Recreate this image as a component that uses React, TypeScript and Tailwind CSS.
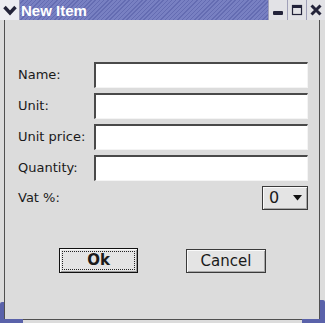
import { useState } from "react";

const fields = ["Name:", "Unit:", "Unit price:", "Quantity:"];

export default function App() {
  const [values, setValues] = useState<string[]>(["", "", "", ""]);

  return (
    <div className="relative w-[325px] h-[323px] bg-[#dcdcdc] flex flex-col font-['DejaVu_Sans',sans-serif] text-[13px] text-[#1a1a1a] overflow-hidden">
      {/* title bar */}
      <div className="h-[20px] flex shrink-0">
        <div className="w-[20px] bg-[#ececf2] flex items-center justify-center border-r border-[#9a9ab8]">
          <svg width="14" height="11" viewBox="0 0 14 11">
            <path d="M1.5 2 L7 8 L12.5 2" fill="none" stroke="#23233a" strokeWidth="3.4" />
          </svg>
        </div>
        <div className="flex-1 flex items-center pl-[1px] bg-[repeating-linear-gradient(135deg,#7880c2_0px,#7880c2_2px,#646cb2_2px,#646cb2_3px)]">
          <span className="font-['Liberation_Sans',sans-serif] font-bold text-[15px] text-white leading-none">New Item</span>
        </div>
        <TitleButton>
          <rect x="3" y="9" width="10" height="4" rx="1" fill="#23233a" />
        </TitleButton>
        <TitleButton>
          <rect x="3.5" y="3.5" width="9" height="9" fill="none" stroke="#23233a" strokeWidth="1.2" />
          <rect x="3" y="3" width="10" height="3" fill="#23233a" />
        </TitleButton>
        <TitleButton>
          <path d="M3.5 3.5 L12.5 12.5 M12.5 3.5 L3.5 12.5" stroke="#23233a" strokeWidth="3" />
        </TitleButton>
      </div>

      {/* client area */}
      <div className="flex-1 ml-[4px] mr-[5px] mb-[3px] border-l border-r border-b border-[#505050] flex flex-col pt-[42px] pl-[13px] pr-[11px]">
        <div className="flex flex-col gap-[5px]">
          {fields.map((label, i) => (
            <div key={label} className="flex items-center h-[26px]">
              <span className="w-[76px] shrink-0">{label}</span>
              <input
                value={values[i]}
                onChange={(e) => {
                  const next = [...values];
                  next[i] = e.target.value;
                  setValues(next);
                }}
                className="flex-1 h-[26px] bg-white outline-none border-t-2 border-l-2 border-b border-r border-t-[#4a4a4a] border-l-[#4a4a4a] border-b-[#f4f4f4] border-r-[#f4f4f4] px-1"
              />
            </div>
          ))}
          <div className="flex items-center justify-between h-[24px]">
            <span>Vat %:</span>
            <div className="w-[46px] h-[24px] border border-[#3a3a3a] bg-[#e4e4e4] flex items-center justify-between pl-[6px] pr-[5px] shadow-[inset_1px_1px_0_#fafafa,inset_-1px_-1px_0_#a8a8a8]">
              <span className="text-[16px] leading-none">0</span>
              <svg width="9" height="6" viewBox="0 0 9 6">
                <path d="M0 0 L9 0 L4.5 5.5 Z" fill="#111" />
              </svg>
            </div>
          </div>
        </div>

        <div className="flex items-center mt-[38px] pl-[41px]">
          <button className="w-[79px] h-[25px] border border-[#111] bg-[#e4e4e4] p-[2px] shadow-[inset_1px_1px_0_#fafafa,inset_-1px_-1px_0_#9a9a9a]">
            <div className="w-full h-full border border-dotted border-[#222] flex items-center justify-center font-bold text-[15px] leading-none">
              Ok
            </div>
          </button>
          <button className="ml-[48px] mt-[1px] w-[80px] h-[24px] border border-[#3a3a3a] bg-[#e4e4e4] flex items-center justify-center text-[15px] leading-none shadow-[inset_1px_1px_0_#fafafa,inset_-1px_-1px_0_#a8a8a8]">
            Cancel
          </button>
        </div>
      </div>

      {/* blue frame corners */}
      <div className="absolute left-0 bottom-0 w-[4px] h-[21px] bg-[#5a62aa] rounded-tl-[2px]" />
      <div className="absolute left-0 bottom-0 w-[23px] h-[4px] bg-[#5a62aa]" />
      <div className="absolute right-0 bottom-0 w-[5px] h-[23px] bg-[#5a62aa] rounded-tr-[2px]" />
      <div className="absolute right-0 bottom-0 w-[23px] h-[4px] bg-[#5a62aa]" />
    </div>
  );
}

function TitleButton({ children }: { children: React.ReactNode }) {
  return (
    <div className="w-[19px] h-[20px] bg-[#e2e2e6] border-l border-[#a0a0b8] flex items-center justify-center">
      <svg width="16" height="16" viewBox="0 0 16 16">
        {children}
      </svg>
    </div>
  );
}
